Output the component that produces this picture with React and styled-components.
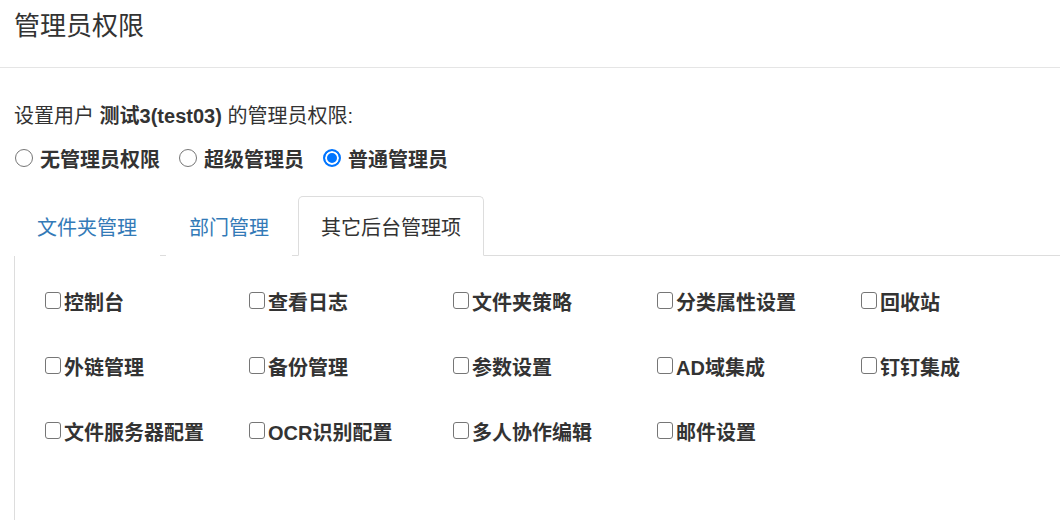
import React, { useState } from 'react';
import styled, { createGlobalStyle } from 'styled-components';

const GlobalStyle = createGlobalStyle`
html, body {
    margin: 0;
    padding: 0;
    background: #fff;
    overflow: hidden;
}
body {
    font-family: "Liberation Sans", "Noto Sans CJK SC", sans-serif;
    color: #333;
}
`

const tabs = ['文件夹管理', '部门管理', '其它后台管理项'];

const roles = [
    { id: 'none', label: '无管理员权限' },
    { id: 'super', label: '超级管理员' },
    { id: 'normal', label: '普通管理员' },
];

const items = [
    '控制台', '查看日志', '文件夹策略', '分类属性设置', '回收站',
    '外链管理', '备份管理', '参数设置', 'AD域集成', '钉钉集成',
    '文件服务器配置', 'OCR识别配置', '多人协作编辑', '邮件设置',
];

const App = () => {
    const [role, setRole] = useState('normal');
    const [active, setActive] = useState(2);
    const [checked, setChecked] = useState({});

    return (
        <Page>
            <GlobalStyle />
            <Header>
                <Title>管理员权限</Title>
            </Header>
            <Body>
                <Intro>
                    设置用户 <b>测试3(test03)</b> 的管理员权限:
                </Intro>
                <RadioRow>
                    {roles.map((r) => (
                        <RadioLabel key={r.id}>
                            <Hidden
                                type="radio"
                                name="role"
                                checked={role === r.id}
                                onChange={() => setRole(r.id)}
                            />
                            <RadioMark $on={role === r.id} />
                            {r.label}
                        </RadioLabel>
                    ))}
                </RadioRow>
                <Nav>
                    {tabs.map((t, i) => (
                        <Tab key={t} $active={active === i} onClick={() => setActive(i)}>
                            {t}
                        </Tab>
                    ))}
                </Nav>
                <Panel>
                    <Grid>
                        {items.map((it) => (
                            <CheckLabel key={it}>
                                <Hidden
                                    type="checkbox"
                                    checked={!!checked[it]}
                                    onChange={() => setChecked({ ...checked, [it]: !checked[it] })}
                                />
                                <CheckMark $on={!!checked[it]} />
                                {it}
                            </CheckLabel>
                        ))}
                    </Grid>
                </Panel>
            </Body>
        </Page>
    )
}

export default App;

const Page = styled.div`
width: 1100px;
`
const Header = styled.div`
height: 68px;
box-sizing: border-box;
padding: 11px 14px 0;
border-bottom: 1px solid #e5e5e5;
`
const Title = styled.h4`
margin: 0;
font-size: 26px;
line-height: 30px;
font-weight: normal;
color: #333;
`
const Body = styled.div`
padding: 34px 0 0 14px;
`
const Intro = styled.div`
font-size: 20px;
line-height: 28px;
b{
    font-weight: bold;
}
`
const RadioRow = styled.div`
display: flex;
align-items: center;
gap: 18px;
margin-top: 14px;
height: 28px;
`
const RadioLabel = styled.label`
display: flex;
align-items: center;
font-size: 20px;
font-weight: bold;
cursor: pointer;
`
const Hidden = styled.input`
position: absolute;
opacity: 0;
width: 0;
height: 0;
margin: 0;
`
const RadioMark = styled.span`
flex: none;
width: 18px;
height: 18px;
margin: 0 7px 0 1px;
box-sizing: border-box;
border-radius: 50%;
border: ${(p) => (p.$on ? '2px solid #0075ff' : '1px solid #767676')};
background: ${(p) => (p.$on ? '#0075ff' : '#fff')};
box-shadow: ${(p) => (p.$on ? 'inset 0 0 0 2px #fff' : 'none')};
`
const Nav = styled.div`
display: flex;
margin-top: 24px;
border-bottom: 1px solid #ddd;
`
const Tab = styled.div`
height: 60px;
box-sizing: border-box;
margin-bottom: -1px;
margin-right: 6px;
padding: 0 22px;
display: flex;
align-items: center;
font-size: 20px;
cursor: pointer;
border: 1px solid ${(p) => (p.$active ? '#ddd' : 'transparent')};
border-bottom-color: ${(p) => (p.$active ? '#fff' : 'transparent')};
border-radius: 5px 5px 0 0;
background: #fff;
color: ${(p) => (p.$active ? '#333' : '#337ab7')};
`
const Panel = styled.div`
border-left: 1px solid #ddd;
border-right: 1px solid #ddd;
min-height: 300px;
padding: 13px 0 0 30px;
`
const Grid = styled.div`
display: grid;
grid-template-columns: repeat(5, 204px);
grid-auto-rows: 65px;
`
const CheckLabel = styled.label`
display: flex;
align-items: center;
font-size: 20px;
font-weight: bold;
color: #333;
cursor: pointer;
`
const CheckMark = styled.span`
flex: none;
width: 16px;
height: 17px;
margin: -3px 3px 0 0;
box-sizing: border-box;
border: 1px solid #767676;
border-radius: 3px;
background: ${(p) => (p.$on ? '#0075ff' : '#fff')};
`
